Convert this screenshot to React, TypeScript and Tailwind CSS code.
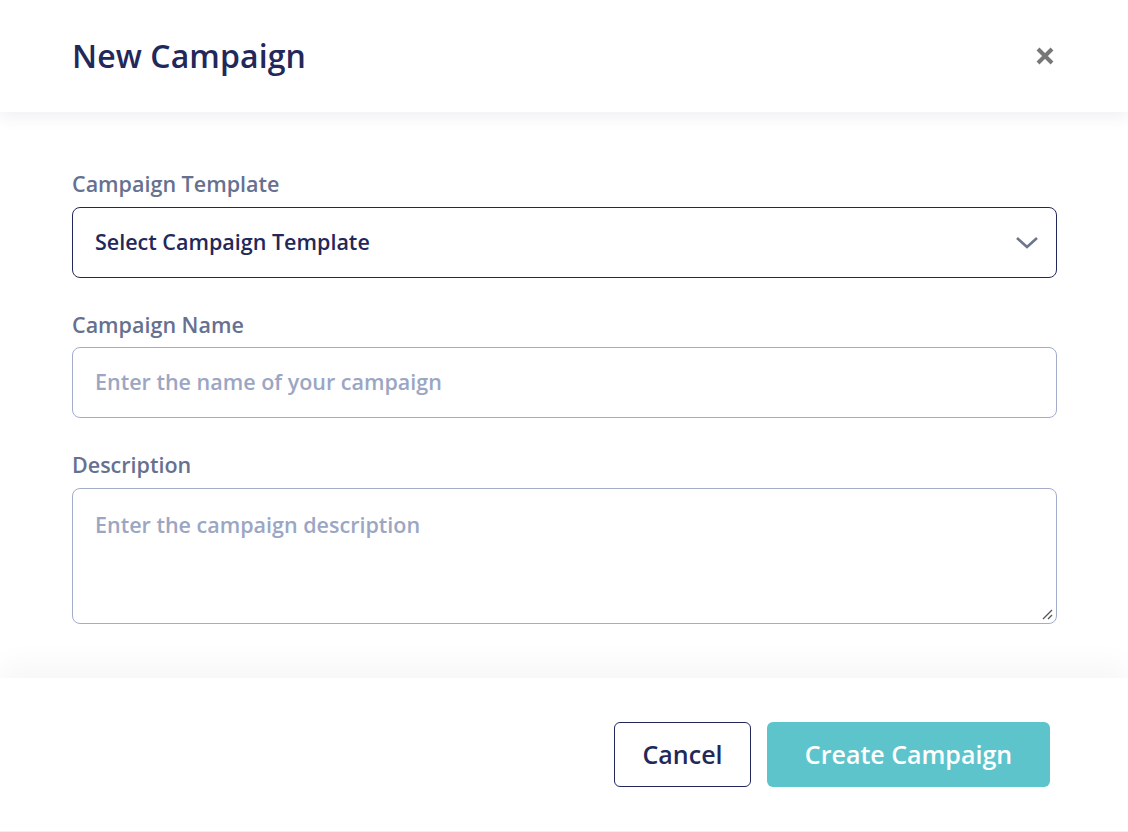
import React from 'react';

const font = { fontFamily: '"Open Sans", "Noto Sans", sans-serif' };

const App = () => {
  return (
    <div className="w-[1128px] h-[832px] bg-white flex flex-col overflow-hidden" style={font}>
      {/* Header */}
      <div className="relative z-10 h-[112px] shrink-0 pl-[72px] pr-[71px] flex items-center justify-between bg-white shadow-[0_6px_14px_rgba(40,50,90,0.07)]">
        <h1 className="text-[32px] font-semibold text-[#23285a] tracking-[0.1px]">New Campaign</h1>
        <button className="w-[24px] h-[24px] flex items-center justify-center">
          <svg width="20" height="20" viewBox="0 0 20 20">
            <path d="M3 3L17 17M17 3L3 17" stroke="#777777" strokeWidth="4" strokeLinecap="butt" />
          </svg>
        </button>
      </div>

      {/* Body */}
      <div className="flex-1 pl-[72px] pr-[71px] pt-[58px] flex flex-col">
        <label className="text-[21.5px] leading-[28px] font-semibold text-[#66718f]">Campaign Template</label>
        <div className="mt-[9px] h-[71px] rounded-[8px] border border-[#23285a] flex items-center justify-between pl-[22px] pr-[16px]">
          <span className="text-[21.5px] font-semibold text-[#23285a]">Select Campaign Template</span>
          <svg width="26" height="16" viewBox="0 0 26 16">
            <path d="M3 3L13 12L23 3" fill="none" stroke="#6b7789" strokeWidth="2.6" />
          </svg>
        </div>

        <label className="mt-[33px] text-[21.5px] leading-[28px] font-semibold text-[#66718f]">Campaign Name</label>
        <div className="mt-[8px] h-[71px] rounded-[8px] border border-[#a3acc9] flex items-center pl-[22px]">
          <span className="text-[21.5px] font-semibold text-[#9ba6c3]">Enter the name of your campaign</span>
        </div>

        <label className="mt-[33px] text-[21.5px] leading-[28px] font-semibold text-[#66718f]">Description</label>
        <div className="relative mt-[9px] h-[136px] rounded-[8px] border border-[#a3acc9] pl-[22px] pt-[22px]">
          <span className="text-[21.5px] leading-[28px] font-semibold text-[#9ba6c3]">Enter the campaign description</span>
          <svg className="absolute right-[3px] bottom-[3px]" width="12" height="12" viewBox="0 0 12 12">
            <path d="M2 11L11 2M7 11L11 7" stroke="#555555" strokeWidth="1.3" />
          </svg>
        </div>
      </div>

      {/* Footer */}
      <div className="h-[154px] shrink-0 bg-white shadow-[0_-14px_28px_rgba(0,0,0,0.035)] border-b border-[#f0f0f0] flex justify-end items-start pt-[44px] pr-[78px] gap-[16px]">
        <button className="w-[137px] h-[65px] rounded-[6px] border border-[#23285a] bg-white text-[25px] font-semibold text-[#23285a]">
          Cancel
        </button>
        <button className="w-[283px] h-[65px] rounded-[6px] bg-[#5ec4cc] text-[25px] font-semibold text-white">
          Create Campaign
        </button>
      </div>
    </div>
  );
};

export default App;
